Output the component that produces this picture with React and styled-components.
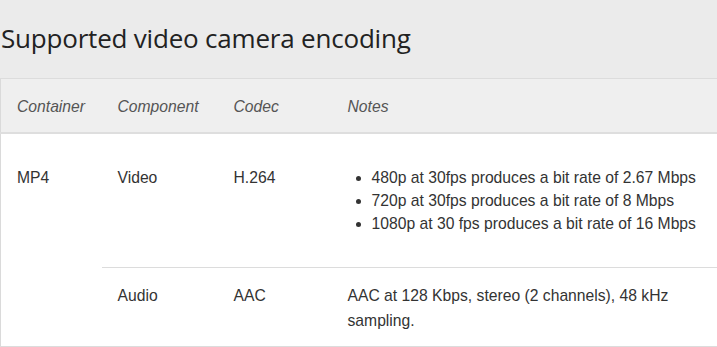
import styled, { createGlobalStyle } from 'styled-components'

const GlobalStyle = createGlobalStyle`
  html, body {
    margin: 0;
    padding: 0;
    background: #ebebeb;
    overflow: hidden;
  }
  body {
    font-family: "Liberation Sans", Arial, sans-serif;
    color: #333;
  }
`

const Page = styled.div`
  width: 730px;
`

const Title = styled.h2`
  margin: 0;
  padding: 22px 0 0 1px;
  height: 56px;
  font-family: "Open Sans", "Noto Sans", sans-serif;
  font-size: 26px;
  font-weight: 400;
  line-height: 32px;
  color: #222;
  letter-spacing: -0.2px;
`

const Table = styled.table`
  width: 730px;
  border-collapse: collapse;
  table-layout: fixed;
  background: #fff;
  border-left: 1px solid #dadada;
  border-top: 1px solid #dcdcdc;
  border-bottom: 1px solid #dcdcdc;
  font-size: 15.7px;
  line-height: 23.5px;
`

const Head = styled.thead`
  background: #efefef;
  border-bottom: 2px solid #dedede;
`

const Th = styled.th`
  text-align: left;
  font-style: italic;
  font-weight: 400;
  color: #555;
  padding: 16px 16px 13px;
`

const Row = styled.tr`
  border-top: ${({ $divided }) => ($divided ? '1px solid #dcdcdc' : 'none')};
`

const Td = styled.td`
  vertical-align: baseline;
  padding: ${({ $tight }) => ($tight ? '16px 16px 13px' : '16px')};
  color: #333;
`

const Bullets = styled.ul`
  margin: 16px 0;
  padding-left: 24px;
  li { line-height: 23.3px; }
`

const rows = [
  { component: 'Video', codec: 'H.264' },
  { component: 'Audio', codec: 'AAC' },
]

const videoNotes = [
  '480p at 30fps produces a bit rate of 2.67 Mbps',
  '720p at 30fps produces a bit rate of 8 Mbps',
  '1080p at 30 fps produces a bit rate of 16 Mbps',
]

export default function App() {
  return (
    <Page>
      <GlobalStyle />
      <Title>Supported video camera encoding</Title>
      <Table>
        <colgroup>
          <col style={{ width: 101 }} />
          <col style={{ width: 116 }} />
          <col style={{ width: 114 }} />
          <col />
        </colgroup>
        <Head>
          <tr>
            <Th>Container</Th>
            <Th>Component</Th>
            <Th>Codec</Th>
            <Th>Notes</Th>
          </tr>
        </Head>
        <tbody>
          <Row>
            <Td rowSpan={2} style={{ paddingTop: 32 }}>MP4</Td>
            <Td style={{ paddingTop: 32 }}>{rows[0].component}</Td>
            <Td style={{ paddingTop: 32 }}>{rows[0].codec}</Td>
            <Td>
              <Bullets>
                {videoNotes.map((n) => (
                  <li key={n}>{n}</li>
                ))}
              </Bullets>
            </Td>
          </Row>
          <Row $divided>
            <Td $tight>{rows[1].component}</Td>
            <Td $tight>{rows[1].codec}</Td>
            <Td $tight style={{ lineHeight: '24.5px' }}>
              AAC at 128 Kbps, stereo (2 channels), 48 kHz sampling.
            </Td>
          </Row>
        </tbody>
      </Table>
    </Page>
  )
}
